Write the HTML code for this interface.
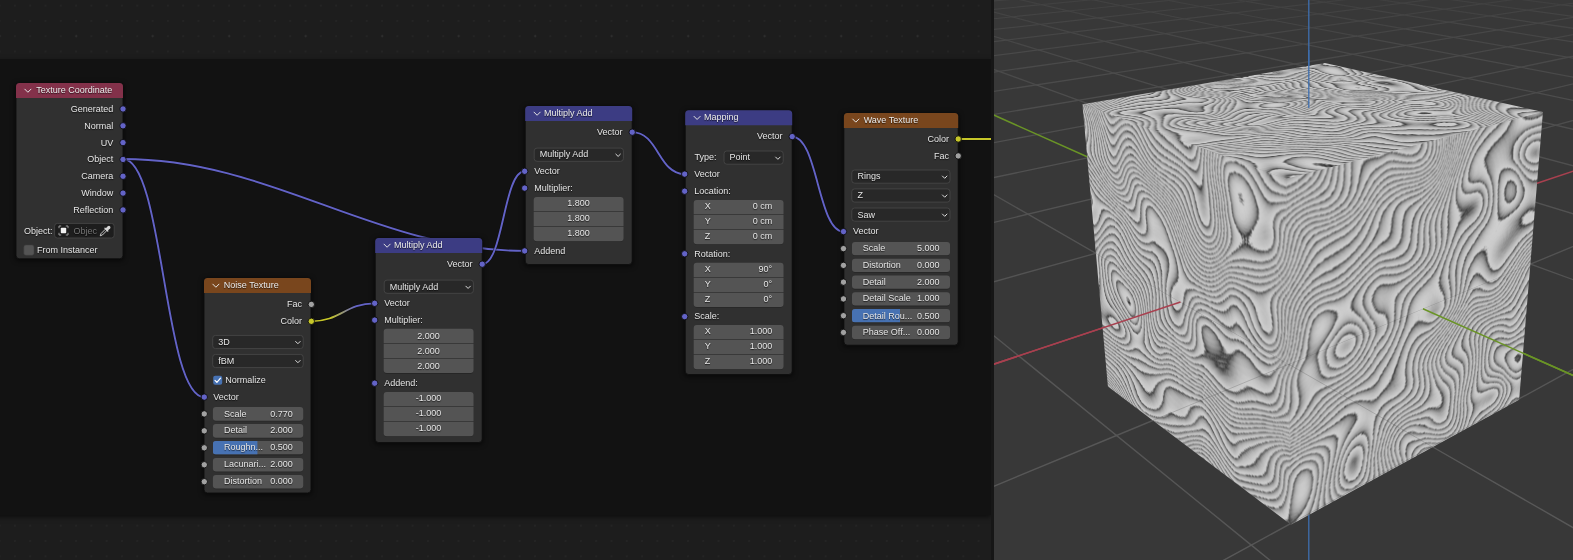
<!DOCTYPE html>
<html><head><meta charset="utf-8"><title>Blender node setup</title>
<style>
html,body{margin:0;padding:0}
body{width:1573px;height:560px;overflow:hidden;position:relative;background:#1d1d1d;font-family:"Liberation Sans",sans-serif;font-size:9px;color:#e6e6e6}
.abs{position:absolute}
#ed{position:absolute;left:0;top:0;width:991px;height:560px;background-color:#1d1d1d;background-image:radial-gradient(circle,#333 0.7px,rgba(51,51,51,0) 1.2px),radial-gradient(circle,#252525 0.6px,rgba(37,37,37,0) 1.1px);background-size:76.5px 76.5px,15.3px 15.3px;background-position:38.0px -2.2px,-8.05px -2.05px;overflow:hidden}
#frame{position:absolute;left:-10px;top:58.8px;width:1001px;height:456.6px;background:#121212;box-shadow:0 2px 5px rgba(0,0,0,.55)}
#nodes{position:absolute;left:0;top:0;width:1573px;height:560px;will-change:transform}
#split{position:absolute;left:991px;top:0;width:3px;height:560px;background:#161616}
.t{position:absolute;white-space:nowrap;height:14px;line-height:14px;text-shadow:0 0.6px 1px rgba(0,0,0,.7)}
.ht{color:#ececec}
.dim{color:#737373}
.face{position:absolute;left:0;top:0;overflow:hidden;transform-origin:0 0}
</style></head><body>
<div id="ed"><div id="frame"></div></div>
<div id="split"></div>
<div id="nodes">

<svg class="abs" style="left:0;top:0" width="991" height="560" viewBox="0 0 991 560"><defs><filter id="sh" x="-20%" y="-20%" width="140%" height="140%"><feGaussianBlur stdDeviation="2.6"/></filter></defs><path d="M123,159.0 C163.7,159.0 163.7,397.1 204.3,397.1" fill="none" stroke="#0b0b0b" stroke-width="2.9" stroke-opacity="0.7"/><path d="M123,159.0 C163.7,159.0 163.7,397.1 204.3,397.1" fill="none" stroke="#6363c7" stroke-width="1.9"/><path d="M123,159.0 C272.3,159.0 375.3,250.9 524.6,250.9" fill="none" stroke="#0b0b0b" stroke-width="2.9" stroke-opacity="0.7"/><path d="M123,159.0 C272.3,159.0 375.3,250.9 524.6,250.9" fill="none" stroke="#6363c7" stroke-width="1.9"/><linearGradient id="g1" gradientUnits="userSpaceOnUse" x1="311.3" y1="0" x2="374.6" y2="0"><stop offset="0.3" stop-color="#c7c729"/><stop offset="0.7" stop-color="#6363c7"/></linearGradient><path d="M311.3,321.3 C340.4,321.3 345.5,303.4 374.6,303.4" fill="none" stroke="#0b0b0b" stroke-width="2.9" stroke-opacity="0.7"/><path d="M311.3,321.3 C340.4,321.3 345.5,303.4 374.6,303.4" fill="none" stroke="url(#g1)" stroke-width="1.8"/><path d="M482.1,264.3 C503.4,264.3 503.4,171.3 524.6,171.3" fill="none" stroke="#0b0b0b" stroke-width="2.9" stroke-opacity="0.7"/><path d="M482.1,264.3 C503.4,264.3 503.4,171.3 524.6,171.3" fill="none" stroke="#6363c7" stroke-width="1.9"/><path d="M632.1,132.1 C658.4,132.1 658.4,174.1 684.6,174.1" fill="none" stroke="#0b0b0b" stroke-width="2.9" stroke-opacity="0.7"/><path d="M632.1,132.1 C658.4,132.1 658.4,174.1 684.6,174.1" fill="none" stroke="#6363c7" stroke-width="1.9"/><path d="M792.1,136.6 C817.9,136.6 817.9,231.6 843.6,231.6" fill="none" stroke="#0b0b0b" stroke-width="2.9" stroke-opacity="0.7"/><path d="M792.1,136.6 C817.9,136.6 817.9,231.6 843.6,231.6" fill="none" stroke="#6363c7" stroke-width="1.9"/><path d="M958,139 L991,139" stroke="#0b0b0b" stroke-width="2.9" stroke-opacity=".7"/><path d="M958,139 L991,139" stroke="#c7c729" stroke-width="1.8"/><rect x="15.00" y="83.50" width="109.00" height="177.30" rx="4" fill="#000" fill-opacity="0.6" filter="url(#sh)"/><rect x="16.00" y="83.00" width="107.00" height="175.80" rx="3.5" fill="#303030" stroke="#0e0e0e" stroke-width="0.9"/><path d="M16.00,98.10 V86.50 Q16.00,83.00 19.50,83.00 H119.50 Q123.00,83.00 123.00,86.50 V98.10 Z" fill="#83314a"/><path d="M24.80,89.15 L27.90,92.25 L31.00,89.15" fill="none" stroke="#e4e4e4" stroke-width="1.0" stroke-linecap="round" stroke-linejoin="round"/><rect x="54.60" y="223.40" width="59.60" height="14.60" rx="2.8" fill="#1d1d1d" stroke="#454545" stroke-width="0.9"/><rect x="23.8" y="244.9" width="10.2" height="10.4" rx="2" fill="#545454" stroke="#3d3d3d" stroke-width="0.6"/><rect x="203.00" y="278.50" width="109.00" height="216.50" rx="4" fill="#000" fill-opacity="0.6" filter="url(#sh)"/><rect x="204.00" y="278.00" width="107.00" height="215.00" rx="3.5" fill="#303030" stroke="#0e0e0e" stroke-width="0.9"/><path d="M204.00,293.10 V281.50 Q204.00,278.00 207.50,278.00 H307.50 Q311.00,278.00 311.00,281.50 V293.10 Z" fill="#79461d"/><path d="M212.80,284.15 L215.90,287.25 L219.00,284.15" fill="none" stroke="#e4e4e4" stroke-width="1.0" stroke-linecap="round" stroke-linejoin="round"/><rect x="212.70" y="335.40" width="90.50" height="13.20" rx="2.8" fill="#282828" stroke="#464646" stroke-width="0.9"/><path d="M295.65,341.48 L297.90,343.73 L300.15,341.48" fill="none" stroke="#dcdcdc" stroke-width="1.0" stroke-linecap="round" stroke-linejoin="round"/><rect x="212.70" y="354.40" width="90.50" height="13.20" rx="2.8" fill="#282828" stroke="#464646" stroke-width="0.9"/><path d="M295.65,360.48 L297.90,362.73 L300.15,360.48" fill="none" stroke="#dcdcdc" stroke-width="1.0" stroke-linecap="round" stroke-linejoin="round"/><rect x="213.2" y="375.8" width="9" height="9" rx="2" fill="#4772b3"/><path d="M215,380.4 L216.9,382.3 L220.5,378.1" fill="none" stroke="#fff" stroke-width="1.2" stroke-linecap="round" stroke-linejoin="round"/><path d="M213.20,417.50 Q213.20,417.50 213.20,417.50 H302.90 Q302.90,417.50 302.90,417.50 V418.50 Q302.90,421.50 299.90,421.50 H216.20 Q213.20,421.50 213.20,418.50 Z" fill="#262626"/><path d="M212.90,410.10 Q212.90,407.10 215.90,407.10 H300.20 Q303.20,407.10 303.20,410.10 V417.70 Q303.20,420.70 300.20,420.70 H215.90 Q212.90,420.70 212.90,417.70 Z" fill="#545454"/><path d="M213.20,434.45 Q213.20,434.45 213.20,434.45 H302.90 Q302.90,434.45 302.90,434.45 V435.45 Q302.90,438.45 299.90,438.45 H216.20 Q213.20,438.45 213.20,435.45 Z" fill="#262626"/><path d="M212.90,427.05 Q212.90,424.05 215.90,424.05 H300.20 Q303.20,424.05 303.20,427.05 V434.65 Q303.20,437.65 300.20,437.65 H215.90 Q212.90,437.65 212.90,434.65 Z" fill="#545454"/><path d="M213.20,451.40 Q213.20,451.40 213.20,451.40 H302.90 Q302.90,451.40 302.90,451.40 V452.40 Q302.90,455.40 299.90,455.40 H216.20 Q213.20,455.40 213.20,452.40 Z" fill="#262626"/><clipPath id="fc1"><rect x="212.90" y="441.00" width="90.30" height="13.60" rx="3"/></clipPath><g clip-path="url(#fc1)"><rect x="212.90" y="441.00" width="90.30" height="13.60" fill="#545454"/><rect x="212.90" y="441.00" width="44.50" height="13.60" fill="#4772b3"/></g><path d="M213.20,468.35 Q213.20,468.35 213.20,468.35 H302.90 Q302.90,468.35 302.90,468.35 V469.35 Q302.90,472.35 299.90,472.35 H216.20 Q213.20,472.35 213.20,469.35 Z" fill="#262626"/><path d="M212.90,460.95 Q212.90,457.95 215.90,457.95 H300.20 Q303.20,457.95 303.20,460.95 V468.55 Q303.20,471.55 300.20,471.55 H215.90 Q212.90,471.55 212.90,468.55 Z" fill="#545454"/><path d="M213.20,485.30 Q213.20,485.30 213.20,485.30 H302.90 Q302.90,485.30 302.90,485.30 V486.30 Q302.90,489.30 299.90,489.30 H216.20 Q213.20,489.30 213.20,486.30 Z" fill="#262626"/><path d="M212.90,477.90 Q212.90,474.90 215.90,474.90 H300.20 Q303.20,474.90 303.20,477.90 V485.50 Q303.20,488.50 300.20,488.50 H215.90 Q212.90,488.50 212.90,485.50 Z" fill="#545454"/><rect x="374.20" y="238.50" width="109.00" height="206.00" rx="4" fill="#000" fill-opacity="0.6" filter="url(#sh)"/><rect x="375.20" y="238.00" width="107.00" height="204.50" rx="3.5" fill="#303030" stroke="#0e0e0e" stroke-width="0.9"/><path d="M375.20,253.10 V241.50 Q375.20,238.00 378.70,238.00 H478.70 Q482.20,238.00 482.20,241.50 V253.10 Z" fill="#3c3c83"/><path d="M384.00,244.15 L387.10,247.25 L390.20,244.15" fill="none" stroke="#e4e4e4" stroke-width="1.0" stroke-linecap="round" stroke-linejoin="round"/><rect x="384.20" y="280.10" width="89.20" height="13.20" rx="2.8" fill="#282828" stroke="#464646" stroke-width="0.9"/><path d="M465.85,286.18 L468.10,288.43 L470.35,286.18" fill="none" stroke="#dcdcdc" stroke-width="1.0" stroke-linecap="round" stroke-linejoin="round"/><path d="M383.70,331.80 Q383.70,328.80 386.70,328.80 H470.50 Q473.50,328.80 473.50,331.80 V343.10 Q473.50,343.10 473.50,343.10 H383.70 Q383.70,343.10 383.70,343.10 Z" fill="#545454"/><path d="M383.70,343.80 Q383.70,343.80 383.70,343.80 H473.50 Q473.50,343.80 473.50,343.80 V358.10 Q473.50,358.10 473.50,358.10 H383.70 Q383.70,358.10 383.70,358.10 Z" fill="#545454"/><path d="M384.00,369.90 Q384.00,369.90 384.00,369.90 H473.20 Q473.20,369.90 473.20,369.90 V370.90 Q473.20,373.90 470.20,373.90 H387.00 Q384.00,373.90 384.00,370.90 Z" fill="#262626"/><path d="M383.70,358.80 Q383.70,358.80 383.70,358.80 H473.50 Q473.50,358.80 473.50,358.80 V370.10 Q473.50,373.10 470.50,373.10 H386.70 Q383.70,373.10 383.70,370.10 Z" fill="#545454"/><path d="M383.70,395.00 Q383.70,392.00 386.70,392.00 H470.50 Q473.50,392.00 473.50,395.00 V406.30 Q473.50,406.30 473.50,406.30 H383.70 Q383.70,406.30 383.70,406.30 Z" fill="#545454"/><path d="M383.70,407.00 Q383.70,407.00 383.70,407.00 H473.50 Q473.50,407.00 473.50,407.00 V421.30 Q473.50,421.30 473.50,421.30 H383.70 Q383.70,421.30 383.70,421.30 Z" fill="#545454"/><path d="M384.00,433.10 Q384.00,433.10 384.00,433.10 H473.20 Q473.20,433.10 473.20,433.10 V434.10 Q473.20,437.10 470.20,437.10 H387.00 Q384.00,437.10 384.00,434.10 Z" fill="#262626"/><path d="M383.70,422.00 Q383.70,422.00 383.70,422.00 H473.50 Q473.50,422.00 473.50,422.00 V433.30 Q473.50,436.30 470.50,436.30 H386.70 Q383.70,436.30 383.70,433.30 Z" fill="#545454"/><rect x="524.20" y="106.50" width="109.00" height="160.00" rx="4" fill="#000" fill-opacity="0.6" filter="url(#sh)"/><rect x="525.20" y="106.00" width="107.00" height="158.50" rx="3.5" fill="#303030" stroke="#0e0e0e" stroke-width="0.9"/><path d="M525.20,121.10 V109.50 Q525.20,106.00 528.70,106.00 H628.70 Q632.20,106.00 632.20,109.50 V121.10 Z" fill="#3c3c83"/><path d="M534.00,112.15 L537.10,115.25 L540.20,112.15" fill="none" stroke="#e4e4e4" stroke-width="1.0" stroke-linecap="round" stroke-linejoin="round"/><rect x="534.20" y="148.10" width="89.20" height="13.20" rx="2.8" fill="#282828" stroke="#464646" stroke-width="0.9"/><path d="M615.85,154.17 L618.10,156.42 L620.35,154.17" fill="none" stroke="#dcdcdc" stroke-width="1.0" stroke-linecap="round" stroke-linejoin="round"/><path d="M533.70,200.00 Q533.70,197.00 536.70,197.00 H620.50 Q623.50,197.00 623.50,200.00 V211.30 Q623.50,211.30 623.50,211.30 H533.70 Q533.70,211.30 533.70,211.30 Z" fill="#545454"/><path d="M533.70,212.00 Q533.70,212.00 533.70,212.00 H623.50 Q623.50,212.00 623.50,212.00 V226.30 Q623.50,226.30 623.50,226.30 H533.70 Q533.70,226.30 533.70,226.30 Z" fill="#545454"/><path d="M534.00,238.10 Q534.00,238.10 534.00,238.10 H623.20 Q623.20,238.10 623.20,238.10 V239.10 Q623.20,242.10 620.20,242.10 H537.00 Q534.00,242.10 534.00,239.10 Z" fill="#262626"/><path d="M533.70,227.00 Q533.70,227.00 533.70,227.00 H623.50 Q623.50,227.00 623.50,227.00 V238.30 Q623.50,241.30 620.50,241.30 H536.70 Q533.70,241.30 533.70,238.30 Z" fill="#545454"/><rect x="684.20" y="110.70" width="109.00" height="265.80" rx="4" fill="#000" fill-opacity="0.6" filter="url(#sh)"/><rect x="685.20" y="110.20" width="107.00" height="264.30" rx="3.5" fill="#303030" stroke="#0e0e0e" stroke-width="0.9"/><path d="M685.20,125.30 V113.70 Q685.20,110.20 688.70,110.20 H788.70 Q792.20,110.20 792.20,113.70 V125.30 Z" fill="#3c3c83"/><path d="M694.00,116.35 L697.10,119.45 L700.20,116.35" fill="none" stroke="#e4e4e4" stroke-width="1.0" stroke-linecap="round" stroke-linejoin="round"/><rect x="724.00" y="151.00" width="59.20" height="13.20" rx="2.8" fill="#282828" stroke="#464646" stroke-width="0.9"/><path d="M775.65,157.07 L777.90,159.32 L780.15,157.07" fill="none" stroke="#dcdcdc" stroke-width="1.0" stroke-linecap="round" stroke-linejoin="round"/><path d="M693.70,203.00 Q693.70,200.00 696.70,200.00 H780.50 Q783.50,200.00 783.50,203.00 V214.30 Q783.50,214.30 783.50,214.30 H693.70 Q693.70,214.30 693.70,214.30 Z" fill="#545454"/><path d="M693.70,215.00 Q693.70,215.00 693.70,215.00 H783.50 Q783.50,215.00 783.50,215.00 V229.30 Q783.50,229.30 783.50,229.30 H693.70 Q693.70,229.30 693.70,229.30 Z" fill="#545454"/><path d="M694.00,241.10 Q694.00,241.10 694.00,241.10 H783.20 Q783.20,241.10 783.20,241.10 V242.10 Q783.20,245.10 780.20,245.10 H697.00 Q694.00,245.10 694.00,242.10 Z" fill="#262626"/><path d="M693.70,230.00 Q693.70,230.00 693.70,230.00 H783.50 Q783.50,230.00 783.50,230.00 V241.30 Q783.50,244.30 780.50,244.30 H696.70 Q693.70,244.30 693.70,241.30 Z" fill="#545454"/><path d="M693.70,265.70 Q693.70,262.70 696.70,262.70 H780.50 Q783.50,262.70 783.50,265.70 V277.00 Q783.50,277.00 783.50,277.00 H693.70 Q693.70,277.00 693.70,277.00 Z" fill="#545454"/><path d="M693.70,277.70 Q693.70,277.70 693.70,277.70 H783.50 Q783.50,277.70 783.50,277.70 V292.00 Q783.50,292.00 783.50,292.00 H693.70 Q693.70,292.00 693.70,292.00 Z" fill="#545454"/><path d="M694.00,303.80 Q694.00,303.80 694.00,303.80 H783.20 Q783.20,303.80 783.20,303.80 V304.80 Q783.20,307.80 780.20,307.80 H697.00 Q694.00,307.80 694.00,304.80 Z" fill="#262626"/><path d="M693.70,292.70 Q693.70,292.70 693.70,292.70 H783.50 Q783.50,292.70 783.50,292.70 V304.00 Q783.50,307.00 780.50,307.00 H696.70 Q693.70,307.00 693.70,304.00 Z" fill="#545454"/><path d="M693.70,328.00 Q693.70,325.00 696.70,325.00 H780.50 Q783.50,325.00 783.50,328.00 V339.30 Q783.50,339.30 783.50,339.30 H693.70 Q693.70,339.30 693.70,339.30 Z" fill="#545454"/><path d="M693.70,340.00 Q693.70,340.00 693.70,340.00 H783.50 Q783.50,340.00 783.50,340.00 V354.30 Q783.50,354.30 783.50,354.30 H693.70 Q693.70,354.30 693.70,354.30 Z" fill="#545454"/><path d="M694.00,366.10 Q694.00,366.10 694.00,366.10 H783.20 Q783.20,366.10 783.20,366.10 V367.10 Q783.20,370.10 780.20,370.10 H697.00 Q694.00,370.10 694.00,367.10 Z" fill="#262626"/><path d="M693.70,355.00 Q693.70,355.00 693.70,355.00 H783.50 Q783.50,355.00 783.50,355.00 V366.30 Q783.50,369.30 780.50,369.30 H696.70 Q693.70,369.30 693.70,366.30 Z" fill="#545454"/><rect x="842.90" y="113.40" width="116.30" height="233.80" rx="4" fill="#000" fill-opacity="0.6" filter="url(#sh)"/><rect x="843.90" y="112.90" width="114.30" height="232.30" rx="3.5" fill="#303030" stroke="#0e0e0e" stroke-width="0.9"/><path d="M843.90,128.00 V116.40 Q843.90,112.90 847.40,112.90 H954.70 Q958.20,112.90 958.20,116.40 V128.00 Z" fill="#79461d"/><path d="M852.70,119.05 L855.80,122.15 L858.90,119.05" fill="none" stroke="#e4e4e4" stroke-width="1.0" stroke-linecap="round" stroke-linejoin="round"/><rect x="851.80" y="170.00" width="98.20" height="13.20" rx="2.8" fill="#282828" stroke="#464646" stroke-width="0.9"/><path d="M942.45,176.07 L944.70,178.32 L946.95,176.07" fill="none" stroke="#dcdcdc" stroke-width="1.0" stroke-linecap="round" stroke-linejoin="round"/><rect x="851.80" y="188.90" width="98.20" height="13.20" rx="2.8" fill="#282828" stroke="#464646" stroke-width="0.9"/><path d="M942.45,194.97 L944.70,197.22 L946.95,194.97" fill="none" stroke="#dcdcdc" stroke-width="1.0" stroke-linecap="round" stroke-linejoin="round"/><rect x="851.80" y="208.00" width="98.20" height="13.20" rx="2.8" fill="#282828" stroke="#464646" stroke-width="0.9"/><path d="M942.45,214.07 L944.70,216.32 L946.95,214.07" fill="none" stroke="#dcdcdc" stroke-width="1.0" stroke-linecap="round" stroke-linejoin="round"/><path d="M852.30,252.10 Q852.30,252.10 852.30,252.10 H949.70 Q949.70,252.10 949.70,252.10 V253.10 Q949.70,256.10 946.70,256.10 H855.30 Q852.30,256.10 852.30,253.10 Z" fill="#262626"/><path d="M852.00,244.90 Q852.00,241.90 855.00,241.90 H947.00 Q950.00,241.90 950.00,244.90 V252.30 Q950.00,255.30 947.00,255.30 H855.00 Q852.00,255.30 852.00,252.30 Z" fill="#545454"/><path d="M852.30,268.87 Q852.30,268.87 852.30,268.87 H949.70 Q949.70,268.87 949.70,268.87 V269.87 Q949.70,272.87 946.70,272.87 H855.30 Q852.30,272.87 852.30,269.87 Z" fill="#262626"/><path d="M852.00,261.67 Q852.00,258.67 855.00,258.67 H947.00 Q950.00,258.67 950.00,261.67 V269.07 Q950.00,272.07 947.00,272.07 H855.00 Q852.00,272.07 852.00,269.07 Z" fill="#545454"/><path d="M852.30,285.64 Q852.30,285.64 852.30,285.64 H949.70 Q949.70,285.64 949.70,285.64 V286.64 Q949.70,289.64 946.70,289.64 H855.30 Q852.30,289.64 852.30,286.64 Z" fill="#262626"/><path d="M852.00,278.44 Q852.00,275.44 855.00,275.44 H947.00 Q950.00,275.44 950.00,278.44 V285.84 Q950.00,288.84 947.00,288.84 H855.00 Q852.00,288.84 852.00,285.84 Z" fill="#545454"/><path d="M852.30,302.41 Q852.30,302.41 852.30,302.41 H949.70 Q949.70,302.41 949.70,302.41 V303.41 Q949.70,306.41 946.70,306.41 H855.30 Q852.30,306.41 852.30,303.41 Z" fill="#262626"/><path d="M852.00,295.21 Q852.00,292.21 855.00,292.21 H947.00 Q950.00,292.21 950.00,295.21 V302.61 Q950.00,305.61 947.00,305.61 H855.00 Q852.00,305.61 852.00,302.61 Z" fill="#545454"/><path d="M852.30,319.18 Q852.30,319.18 852.30,319.18 H949.70 Q949.70,319.18 949.70,319.18 V320.18 Q949.70,323.18 946.70,323.18 H855.30 Q852.30,323.18 852.30,320.18 Z" fill="#262626"/><clipPath id="fc2"><rect x="852.00" y="308.98" width="98.00" height="13.40" rx="3"/></clipPath><g clip-path="url(#fc2)"><rect x="852.00" y="308.98" width="98.00" height="13.40" fill="#545454"/><rect x="852.00" y="308.98" width="48.00" height="13.40" fill="#4772b3"/></g><path d="M852.30,335.95 Q852.30,335.95 852.30,335.95 H949.70 Q949.70,335.95 949.70,335.95 V336.95 Q949.70,339.95 946.70,339.95 H855.30 Q852.30,339.95 852.30,336.95 Z" fill="#262626"/><path d="M852.00,328.75 Q852.00,325.75 855.00,325.75 H947.00 Q950.00,325.75 950.00,328.75 V336.15 Q950.00,339.15 947.00,339.15 H855.00 Q852.00,339.15 852.00,336.15 Z" fill="#545454"/><circle cx="123.00" cy="108.95" r="3.2" fill="#6363c7" stroke="#0d0d0d" stroke-width="0.9"/><circle cx="123.00" cy="125.78" r="3.2" fill="#6363c7" stroke="#0d0d0d" stroke-width="0.9"/><circle cx="123.00" cy="142.61" r="3.2" fill="#6363c7" stroke="#0d0d0d" stroke-width="0.9"/><circle cx="123.00" cy="159.44" r="3.2" fill="#6363c7" stroke="#0d0d0d" stroke-width="0.9"/><circle cx="123.00" cy="176.27" r="3.2" fill="#6363c7" stroke="#0d0d0d" stroke-width="0.9"/><circle cx="123.00" cy="193.10" r="3.2" fill="#6363c7" stroke="#0d0d0d" stroke-width="0.9"/><circle cx="123.00" cy="209.93" r="3.2" fill="#6363c7" stroke="#0d0d0d" stroke-width="0.9"/><circle cx="311.30" cy="304.40" r="3.2" fill="#a1a1a1" stroke="#0d0d0d" stroke-width="0.9"/><circle cx="311.30" cy="321.30" r="3.2" fill="#c7c729" stroke="#0d0d0d" stroke-width="0.9"/><circle cx="204.30" cy="397.10" r="3.2" fill="#6363c7" stroke="#0d0d0d" stroke-width="0.9"/><circle cx="204.30" cy="413.90" r="3.2" fill="#a1a1a1" stroke="#0d0d0d" stroke-width="0.9"/><circle cx="204.30" cy="430.85" r="3.2" fill="#a1a1a1" stroke="#0d0d0d" stroke-width="0.9"/><circle cx="204.30" cy="447.80" r="3.2" fill="#a1a1a1" stroke="#0d0d0d" stroke-width="0.9"/><circle cx="204.30" cy="464.75" r="3.2" fill="#a1a1a1" stroke="#0d0d0d" stroke-width="0.9"/><circle cx="204.30" cy="481.70" r="3.2" fill="#a1a1a1" stroke="#0d0d0d" stroke-width="0.9"/><circle cx="482.20" cy="264.20" r="3.2" fill="#6363c7" stroke="#0d0d0d" stroke-width="0.9"/><circle cx="374.70" cy="303.30" r="3.2" fill="#6363c7" stroke="#0d0d0d" stroke-width="0.9"/><circle cx="374.70" cy="320.10" r="3.2" fill="#6363c7" stroke="#0d0d0d" stroke-width="0.9"/><circle cx="374.70" cy="383.20" r="3.2" fill="#6363c7" stroke="#0d0d0d" stroke-width="0.9"/><circle cx="632.20" cy="132.20" r="3.2" fill="#6363c7" stroke="#0d0d0d" stroke-width="0.9"/><circle cx="524.70" cy="171.30" r="3.2" fill="#6363c7" stroke="#0d0d0d" stroke-width="0.9"/><circle cx="524.70" cy="188.10" r="3.2" fill="#6363c7" stroke="#0d0d0d" stroke-width="0.9"/><circle cx="524.70" cy="250.90" r="3.2" fill="#6363c7" stroke="#0d0d0d" stroke-width="0.9"/><circle cx="792.20" cy="136.60" r="3.2" fill="#6363c7" stroke="#0d0d0d" stroke-width="0.9"/><circle cx="684.70" cy="174.10" r="3.2" fill="#6363c7" stroke="#0d0d0d" stroke-width="0.9"/><circle cx="684.70" cy="191.20" r="3.2" fill="#6363c7" stroke="#0d0d0d" stroke-width="0.9"/><circle cx="684.70" cy="253.80" r="3.2" fill="#6363c7" stroke="#0d0d0d" stroke-width="0.9"/><circle cx="684.70" cy="316.60" r="3.2" fill="#6363c7" stroke="#0d0d0d" stroke-width="0.9"/><circle cx="958.20" cy="139.00" r="3.2" fill="#c7c729" stroke="#0d0d0d" stroke-width="0.9"/><circle cx="958.20" cy="155.90" r="3.2" fill="#a1a1a1" stroke="#0d0d0d" stroke-width="0.9"/><circle cx="843.50" cy="231.60" r="3.2" fill="#6363c7" stroke="#0d0d0d" stroke-width="0.9"/><circle cx="843.50" cy="248.60" r="3.2" fill="#a1a1a1" stroke="#0d0d0d" stroke-width="0.9"/><circle cx="843.50" cy="265.37" r="3.2" fill="#a1a1a1" stroke="#0d0d0d" stroke-width="0.9"/><circle cx="843.50" cy="282.14" r="3.2" fill="#a1a1a1" stroke="#0d0d0d" stroke-width="0.9"/><circle cx="843.50" cy="298.91" r="3.2" fill="#a1a1a1" stroke="#0d0d0d" stroke-width="0.9"/><circle cx="843.50" cy="315.68" r="3.2" fill="#a1a1a1" stroke="#0d0d0d" stroke-width="0.9"/><circle cx="843.50" cy="332.45" r="3.2" fill="#a1a1a1" stroke="#0d0d0d" stroke-width="0.9"/></svg>
<div class="t ht" style="left:36.20px;top:83.00px">Texture Coordinate</div>
<div class="t " style="right:1459.70px;text-align:right;top:101.95px">Generated</div>
<div class="t " style="right:1459.70px;text-align:right;top:118.78px">Normal</div>
<div class="t " style="right:1459.70px;text-align:right;top:135.61px">UV</div>
<div class="t " style="right:1459.70px;text-align:right;top:152.44px">Object</div>
<div class="t " style="right:1459.70px;text-align:right;top:169.27px">Camera</div>
<div class="t " style="right:1459.70px;text-align:right;top:186.10px">Window</div>
<div class="t " style="right:1459.70px;text-align:right;top:202.93px">Reflection</div>
<div class="t " style="left:24.00px;top:223.50px">Object:</div>
<svg class="abs" style="left:57.7px;top:225.3px" width="11" height="11" viewBox="0 0 11 11"><path d="M1,3.2V1H3.2M7.8,1H10V3.2M10,7.8V10H7.8M3.2,10H1V7.8" fill="none" stroke="#9a9a9a" stroke-width="1"/><rect x="2.8" y="2.8" width="5.4" height="5.4" rx="0.8" fill="#f2f2f2"/></svg>
<div class="t dim" style="left:73.50px;top:223.50px">Objec</div>
<svg class="abs" style="left:99px;top:225px" width="12" height="12" viewBox="0 0 12 12"><path d="M1.2,10.8 L2,8.6 L6.6,4 L8,5.4 L3.4,10 Z" fill="none" stroke="#d8d8d8" stroke-width="0.9" stroke-linejoin="round"/><path d="M6,3.2 L8.8,6 M7,4.4 L8.6,2.2 Q9.8,1 10.6,1.9 Q11.2,2.8 9.9,3.8 L7.9,5.3" fill="#d8d8d8" stroke="#d8d8d8" stroke-width="1.3" stroke-linecap="round"/></svg>
<div class="t " style="left:37.00px;top:243.00px">From Instancer</div>
<div class="t ht" style="left:223.80px;top:278.00px">Noise Texture</div>
<div class="t " style="right:1271.00px;text-align:right;top:297.30px">Fac</div>
<div class="t " style="right:1271.00px;text-align:right;top:314.20px">Color</div>
<div class="t " style="left:218.30px;top:334.70px">3D</div>
<div class="t " style="left:218.30px;top:353.70px">fBM</div>
<div class="t " style="left:225.20px;top:373.20px">Normalize</div>
<div class="t " style="left:213.20px;top:390.00px">Vector</div>
<div class="t " style="left:223.90px;top:407.20px">Scale</div>
<div class="t " style="right:1280.30px;text-align:right;top:407.20px">0.770</div>
<div class="t " style="left:223.90px;top:423.35px">Detail</div>
<div class="t " style="right:1280.30px;text-align:right;top:423.35px">2.000</div>
<div class="t " style="left:223.90px;top:440.30px">Roughn...</div>
<div class="t " style="right:1280.30px;text-align:right;top:440.30px">0.500</div>
<div class="t " style="left:223.90px;top:457.25px">Lacunari...</div>
<div class="t " style="right:1280.30px;text-align:right;top:457.25px">2.000</div>
<div class="t " style="left:223.90px;top:474.20px">Distortion</div>
<div class="t " style="right:1280.30px;text-align:right;top:474.20px">0.000</div>
<div class="t ht" style="left:393.90px;top:238.00px">Multiply Add</div>
<div class="t " style="right:1100.50px;text-align:right;top:257.10px">Vector</div>
<div class="t " style="left:389.80px;top:280.10px">Multiply Add</div>
<div class="t " style="left:384.20px;top:296.20px">Vector</div>
<div class="t " style="left:384.20px;top:313.00px">Multiplier:</div>
<div class="t " style="left:383.70px;width:89.80px;text-align:center;top:329.05px">2.000</div>
<div class="t " style="left:383.70px;width:89.80px;text-align:center;top:344.05px">2.000</div>
<div class="t " style="left:383.70px;width:89.80px;text-align:center;top:359.05px">2.000</div>
<div class="t " style="left:384.20px;top:376.10px">Addend:</div>
<div class="t " style="left:383.70px;width:89.80px;text-align:center;top:391.25px">-1.000</div>
<div class="t " style="left:383.70px;width:89.80px;text-align:center;top:406.25px">-1.000</div>
<div class="t " style="left:383.70px;width:89.80px;text-align:center;top:421.25px">-1.000</div>
<div class="t ht" style="left:543.90px;top:106.00px">Multiply Add</div>
<div class="t " style="right:950.50px;text-align:right;top:125.10px">Vector</div>
<div class="t " style="left:539.80px;top:147.40px">Multiply Add</div>
<div class="t " style="left:534.20px;top:164.20px">Vector</div>
<div class="t " style="left:534.20px;top:181.00px">Multiplier:</div>
<div class="t " style="left:533.70px;width:89.80px;text-align:center;top:196.25px">1.800</div>
<div class="t " style="left:533.70px;width:89.80px;text-align:center;top:211.25px">1.800</div>
<div class="t " style="left:533.70px;width:89.80px;text-align:center;top:226.25px">1.800</div>
<div class="t " style="left:534.20px;top:243.80px">Addend</div>
<div class="t ht" style="left:703.90px;top:110.20px">Mapping</div>
<div class="t " style="right:790.50px;text-align:right;top:129.20px">Vector</div>
<div class="t " style="left:694.40px;top:150.30px">Type:</div>
<div class="t " style="left:729.60px;top:150.30px">Point</div>
<div class="t " style="left:694.20px;top:167.00px">Vector</div>
<div class="t " style="left:694.20px;top:184.10px">Location:</div>
<div class="t " style="left:704.70px;top:199.25px">X</div>
<div class="t " style="right:800.80px;text-align:right;top:199.25px">0 cm</div>
<div class="t " style="left:704.70px;top:214.25px">Y</div>
<div class="t " style="right:800.80px;text-align:right;top:214.25px">0 cm</div>
<div class="t " style="left:704.70px;top:229.25px">Z</div>
<div class="t " style="right:800.80px;text-align:right;top:229.25px">0 cm</div>
<div class="t " style="left:694.20px;top:246.70px">Rotation:</div>
<div class="t " style="left:704.70px;top:261.95px">X</div>
<div class="t " style="right:800.80px;text-align:right;top:261.95px">90°</div>
<div class="t " style="left:704.70px;top:276.95px">Y</div>
<div class="t " style="right:800.80px;text-align:right;top:276.95px">0°</div>
<div class="t " style="left:704.70px;top:291.95px">Z</div>
<div class="t " style="right:800.80px;text-align:right;top:291.95px">0°</div>
<div class="t " style="left:694.20px;top:308.60px">Scale:</div>
<div class="t " style="left:704.70px;top:324.25px">X</div>
<div class="t " style="right:800.80px;text-align:right;top:324.25px">1.000</div>
<div class="t " style="left:704.70px;top:339.25px">Y</div>
<div class="t " style="right:800.80px;text-align:right;top:339.25px">1.000</div>
<div class="t " style="left:704.70px;top:354.25px">Z</div>
<div class="t " style="right:800.80px;text-align:right;top:354.25px">1.000</div>
<div class="t ht" style="left:863.70px;top:112.90px">Wave Texture</div>
<div class="t " style="right:624.00px;text-align:right;top:131.90px">Color</div>
<div class="t " style="right:624.00px;text-align:right;top:148.80px">Fac</div>
<div class="t " style="left:857.40px;top:169.30px">Rings</div>
<div class="t " style="left:857.40px;top:188.20px">Z</div>
<div class="t " style="left:857.40px;top:208.10px">Saw</div>
<div class="t " style="left:853.00px;top:223.90px">Vector</div>
<div class="t " style="left:862.80px;top:241.10px">Scale</div>
<div class="t " style="right:633.50px;text-align:right;top:241.10px">5.000</div>
<div class="t " style="left:862.80px;top:257.87px">Distortion</div>
<div class="t " style="right:633.50px;text-align:right;top:257.87px">0.000</div>
<div class="t " style="left:862.80px;top:274.64px">Detail</div>
<div class="t " style="right:633.50px;text-align:right;top:274.64px">2.000</div>
<div class="t " style="left:862.80px;top:291.41px">Detail Scale</div>
<div class="t " style="right:633.50px;text-align:right;top:291.41px">1.000</div>
<div class="t " style="left:862.80px;top:309.08px">Detail Rou...</div>
<div class="t " style="right:633.50px;text-align:right;top:309.08px">0.500</div>
<div class="t " style="left:862.80px;top:324.95px">Phase Off...</div>
<div class="t " style="right:633.50px;text-align:right;top:324.95px">0.000</div>
</div>
<svg class="abs" style="left:0;top:0" width="1573" height="560" viewBox="0 0 1573 560"><defs><clipPath id="vp"><rect x="994" y="0" width="579" height="560"/></clipPath></defs><g clip-path="url(#vp)"><rect x="994" y="0" width="579" height="560" fill="#383838"/><line x1="993.5" y1="-6.5" x2="885.2" y2="2.9" stroke="#404040" stroke-width="1.21" stroke-linecap="round"/><line x1="1539.8" y1="-14.6" x2="1625.0" y2="-4.8" stroke="#3f3f3f" stroke-width="1.20" stroke-linecap="round"/><line x1="1113.3" y1="-10.1" x2="1016.6" y2="-1.1" stroke="#404040" stroke-width="1.21" stroke-linecap="round"/><line x1="1016.6" y1="-1.1" x2="905.4" y2="9.1" stroke="#424242" stroke-width="1.22" stroke-linecap="round"/><line x1="1508.9" y1="-10.6" x2="1594.7" y2="-0.2" stroke="#3f3f3f" stroke-width="1.20" stroke-linecap="round"/><line x1="1226.4" y1="-13.4" x2="1140.2" y2="-5.0" stroke="#3f3f3f" stroke-width="1.20" stroke-linecap="round"/><line x1="1140.2" y1="-5.0" x2="1041.5" y2="4.7" stroke="#414141" stroke-width="1.21" stroke-linecap="round"/><line x1="1041.5" y1="4.7" x2="927.3" y2="15.9" stroke="#434343" stroke-width="1.23" stroke-linecap="round"/><line x1="1475.9" y1="-6.3" x2="1562.1" y2="4.8" stroke="#404040" stroke-width="1.21" stroke-linecap="round"/><line x1="1562.1" y1="4.8" x2="1663.3" y2="17.9" stroke="#434343" stroke-width="1.23" stroke-linecap="round"/><line x1="1256.6" y1="-8.6" x2="1169.1" y2="0.5" stroke="#404040" stroke-width="1.21" stroke-linecap="round"/><line x1="1169.1" y1="0.5" x2="1068.4" y2="11.0" stroke="#424242" stroke-width="1.22" stroke-linecap="round"/><line x1="1068.4" y1="11.0" x2="951.3" y2="23.2" stroke="#444444" stroke-width="1.24" stroke-linecap="round"/><line x1="1366.5" y1="-12.0" x2="1440.6" y2="-1.8" stroke="#3f3f3f" stroke-width="1.20" stroke-linecap="round"/><line x1="1440.6" y1="-1.8" x2="1527.1" y2="10.1" stroke="#414141" stroke-width="1.22" stroke-linecap="round"/><line x1="1527.1" y1="10.1" x2="1629.3" y2="24.2" stroke="#444444" stroke-width="1.23" stroke-linecap="round"/><line x1="1366.5" y1="-12.0" x2="1289.2" y2="-3.4" stroke="#3f3f3f" stroke-width="1.20" stroke-linecap="round"/><line x1="1289.2" y1="-3.4" x2="1200.5" y2="6.5" stroke="#414141" stroke-width="1.22" stroke-linecap="round"/><line x1="1200.5" y1="6.5" x2="1097.8" y2="17.9" stroke="#434343" stroke-width="1.23" stroke-linecap="round"/><line x1="1097.8" y1="17.9" x2="977.6" y2="31.3" stroke="#454545" stroke-width="1.25" stroke-linecap="round"/><line x1="1329.1" y1="-7.8" x2="1402.9" y2="3.1" stroke="#404040" stroke-width="1.21" stroke-linecap="round"/><line x1="1402.9" y1="3.1" x2="1489.4" y2="15.9" stroke="#424242" stroke-width="1.23" stroke-linecap="round"/><line x1="1489.4" y1="15.9" x2="1592.3" y2="31.1" stroke="#454545" stroke-width="1.24" stroke-linecap="round"/><line x1="1402.2" y1="-7.1" x2="1324.3" y2="2.2" stroke="#404040" stroke-width="1.21" stroke-linecap="round"/><line x1="1324.3" y1="2.2" x2="1234.5" y2="12.9" stroke="#424242" stroke-width="1.22" stroke-linecap="round"/><line x1="1234.5" y1="12.9" x2="1129.9" y2="25.4" stroke="#444444" stroke-width="1.24" stroke-linecap="round"/><line x1="1129.9" y1="25.4" x2="1006.5" y2="40.1" stroke="#464646" stroke-width="1.25" stroke-linecap="round"/><line x1="1006.5" y1="40.1" x2="858.8" y2="57.8" stroke="#484848" stroke-width="1.27" stroke-linecap="round"/><line x1="1226.4" y1="-13.4" x2="1289.2" y2="-3.4" stroke="#3f3f3f" stroke-width="1.20" stroke-linecap="round"/><line x1="1289.2" y1="-3.4" x2="1362.3" y2="8.3" stroke="#414141" stroke-width="1.22" stroke-linecap="round"/><line x1="1362.3" y1="8.3" x2="1448.7" y2="22.1" stroke="#434343" stroke-width="1.23" stroke-linecap="round"/><line x1="1448.7" y1="22.1" x2="1552.1" y2="38.6" stroke="#464646" stroke-width="1.25" stroke-linecap="round"/><line x1="1552.1" y1="38.6" x2="1678.3" y2="58.7" stroke="#484848" stroke-width="1.27" stroke-linecap="round"/><line x1="1508.9" y1="-10.6" x2="1440.6" y2="-1.8" stroke="#3f3f3f" stroke-width="1.20" stroke-linecap="round"/><line x1="1440.6" y1="-1.8" x2="1362.3" y2="8.3" stroke="#414141" stroke-width="1.22" stroke-linecap="round"/><line x1="1362.3" y1="8.3" x2="1271.6" y2="20.0" stroke="#434343" stroke-width="1.23" stroke-linecap="round"/><line x1="1271.6" y1="20.0" x2="1165.1" y2="33.7" stroke="#454545" stroke-width="1.25" stroke-linecap="round"/><line x1="1165.1" y1="33.7" x2="1038.5" y2="49.9" stroke="#474747" stroke-width="1.26" stroke-linecap="round"/><line x1="1038.5" y1="49.9" x2="885.4" y2="69.6" stroke="#494949" stroke-width="1.28" stroke-linecap="round"/><line x1="1184.7" y1="-9.3" x2="1246.4" y2="1.4" stroke="#404040" stroke-width="1.21" stroke-linecap="round"/><line x1="1246.4" y1="1.4" x2="1318.7" y2="13.9" stroke="#424242" stroke-width="1.22" stroke-linecap="round"/><line x1="1318.7" y1="13.9" x2="1404.6" y2="28.8" stroke="#444444" stroke-width="1.24" stroke-linecap="round"/><line x1="1404.6" y1="28.8" x2="1508.2" y2="46.8" stroke="#474747" stroke-width="1.26" stroke-linecap="round"/><line x1="1508.2" y1="46.8" x2="1635.8" y2="68.9" stroke="#494949" stroke-width="1.27" stroke-linecap="round"/><line x1="1550.2" y1="-5.6" x2="1482.1" y2="3.9" stroke="#404040" stroke-width="1.21" stroke-linecap="round"/><line x1="1482.1" y1="3.9" x2="1403.7" y2="14.9" stroke="#424242" stroke-width="1.23" stroke-linecap="round"/><line x1="1403.7" y1="14.9" x2="1312.1" y2="27.7" stroke="#444444" stroke-width="1.24" stroke-linecap="round"/><line x1="1312.1" y1="27.7" x2="1203.9" y2="42.7" stroke="#464646" stroke-width="1.26" stroke-linecap="round"/><line x1="1203.9" y1="42.7" x2="1074.1" y2="60.9" stroke="#484848" stroke-width="1.27" stroke-linecap="round"/><line x1="1074.1" y1="60.9" x2="915.5" y2="83.0" stroke="#4a4a4a" stroke-width="1.28" stroke-linecap="round"/><line x1="1088.3" y1="-14.8" x2="1140.2" y2="-5.0" stroke="#3f3f3f" stroke-width="1.20" stroke-linecap="round"/><line x1="1140.2" y1="-5.0" x2="1200.5" y2="6.5" stroke="#414141" stroke-width="1.21" stroke-linecap="round"/><line x1="1200.5" y1="6.5" x2="1271.6" y2="20.0" stroke="#434343" stroke-width="1.23" stroke-linecap="round"/><line x1="1271.6" y1="20.0" x2="1356.6" y2="36.1" stroke="#454545" stroke-width="1.25" stroke-linecap="round"/><line x1="1356.6" y1="36.1" x2="1460.0" y2="55.7" stroke="#484848" stroke-width="1.26" stroke-linecap="round"/><line x1="1460.0" y1="55.7" x2="1588.7" y2="80.1" stroke="#4a4a4a" stroke-width="1.28" stroke-linecap="round"/><line x1="1594.7" y1="-0.2" x2="1527.1" y2="10.1" stroke="#414141" stroke-width="1.22" stroke-linecap="round"/><line x1="1527.1" y1="10.1" x2="1448.7" y2="22.1" stroke="#434343" stroke-width="1.23" stroke-linecap="round"/><line x1="1448.7" y1="22.1" x2="1356.6" y2="36.1" stroke="#454545" stroke-width="1.25" stroke-linecap="round"/><line x1="1356.6" y1="36.1" x2="1246.9" y2="52.8" stroke="#474747" stroke-width="1.26" stroke-linecap="round"/><line x1="1246.9" y1="52.8" x2="1113.9" y2="73.1" stroke="#494949" stroke-width="1.28" stroke-linecap="round"/><line x1="1113.9" y1="73.1" x2="949.4" y2="98.1" stroke="#4b4b4b" stroke-width="1.29" stroke-linecap="round"/><line x1="1042.5" y1="-10.8" x2="1092.5" y2="-0.3" stroke="#404040" stroke-width="1.21" stroke-linecap="round"/><line x1="1092.5" y1="-0.3" x2="1151.1" y2="12.0" stroke="#424242" stroke-width="1.22" stroke-linecap="round"/><line x1="1151.1" y1="12.0" x2="1220.6" y2="26.5" stroke="#444444" stroke-width="1.24" stroke-linecap="round"/><line x1="1220.6" y1="26.5" x2="1304.2" y2="44.1" stroke="#464646" stroke-width="1.26" stroke-linecap="round"/><line x1="1304.2" y1="44.1" x2="1407.0" y2="65.6" stroke="#494949" stroke-width="1.27" stroke-linecap="round"/><line x1="1407.0" y1="65.6" x2="1536.2" y2="92.7" stroke="#4b4b4b" stroke-width="1.29" stroke-linecap="round"/><line x1="1536.2" y1="92.7" x2="1703.6" y2="127.8" stroke="#4d4d4d" stroke-width="1.30" stroke-linecap="round"/><line x1="1642.7" y1="5.7" x2="1576.0" y2="16.9" stroke="#434343" stroke-width="1.23" stroke-linecap="round"/><line x1="1576.0" y1="16.9" x2="1498.0" y2="29.9" stroke="#454545" stroke-width="1.24" stroke-linecap="round"/><line x1="1498.0" y1="29.9" x2="1405.7" y2="45.4" stroke="#474747" stroke-width="1.26" stroke-linecap="round"/><line x1="1405.7" y1="45.4" x2="1294.7" y2="64.0" stroke="#494949" stroke-width="1.27" stroke-linecap="round"/><line x1="1294.7" y1="64.0" x2="1158.7" y2="86.8" stroke="#4b4b4b" stroke-width="1.29" stroke-linecap="round"/><line x1="1158.7" y1="86.8" x2="988.2" y2="115.4" stroke="#4d4d4d" stroke-width="1.30" stroke-linecap="round"/><line x1="993.5" y1="-6.5" x2="1041.5" y2="4.7" stroke="#414141" stroke-width="1.21" stroke-linecap="round"/><line x1="1041.5" y1="4.7" x2="1097.8" y2="17.9" stroke="#434343" stroke-width="1.23" stroke-linecap="round"/><line x1="1097.8" y1="17.9" x2="1165.1" y2="33.7" stroke="#454545" stroke-width="1.25" stroke-linecap="round"/><line x1="1165.1" y1="33.7" x2="1246.9" y2="52.8" stroke="#474747" stroke-width="1.26" stroke-linecap="round"/><line x1="1246.9" y1="52.8" x2="1348.2" y2="76.6" stroke="#4a4a4a" stroke-width="1.28" stroke-linecap="round"/><line x1="1348.2" y1="76.6" x2="1477.3" y2="106.8" stroke="#4c4c4c" stroke-width="1.30" stroke-linecap="round"/><line x1="1477.3" y1="106.8" x2="1647.1" y2="146.6" stroke="#4e4e4e" stroke-width="1.31" stroke-linecap="round"/><line x1="1629.3" y1="24.2" x2="1552.1" y2="38.6" stroke="#464646" stroke-width="1.25" stroke-linecap="round"/><line x1="1552.1" y1="38.6" x2="1460.0" y2="55.7" stroke="#484848" stroke-width="1.27" stroke-linecap="round"/><line x1="1460.0" y1="55.7" x2="1348.2" y2="76.6" stroke="#4a4a4a" stroke-width="1.28" stroke-linecap="round"/><line x1="1348.2" y1="76.6" x2="1209.5" y2="102.4" stroke="#4c4c4c" stroke-width="1.29" stroke-linecap="round"/><line x1="1209.5" y1="102.4" x2="1033.0" y2="135.3" stroke="#4e4e4e" stroke-width="1.31" stroke-linecap="round"/><line x1="1033.0" y1="135.3" x2="800.6" y2="178.5" stroke="#505050" stroke-width="1.32" stroke-linecap="round"/><line x1="986.5" y1="10.1" x2="1040.2" y2="24.3" stroke="#444444" stroke-width="1.24" stroke-linecap="round"/><line x1="1040.2" y1="24.3" x2="1104.7" y2="41.4" stroke="#464646" stroke-width="1.25" stroke-linecap="round"/><line x1="1104.7" y1="41.4" x2="1183.7" y2="62.4" stroke="#484848" stroke-width="1.27" stroke-linecap="round"/><line x1="1183.7" y1="62.4" x2="1282.8" y2="88.7" stroke="#4b4b4b" stroke-width="1.29" stroke-linecap="round"/><line x1="1282.8" y1="88.7" x2="1410.7" y2="122.7" stroke="#4d4d4d" stroke-width="1.30" stroke-linecap="round"/><line x1="1410.7" y1="122.7" x2="1582.2" y2="168.2" stroke="#4f4f4f" stroke-width="1.32" stroke-linecap="round"/><line x1="1611.9" y1="48.1" x2="1520.7" y2="67.2" stroke="#494949" stroke-width="1.27" stroke-linecap="round"/><line x1="1520.7" y1="67.2" x2="1408.6" y2="90.7" stroke="#4b4b4b" stroke-width="1.29" stroke-linecap="round"/><line x1="1408.6" y1="90.7" x2="1267.7" y2="120.2" stroke="#4d4d4d" stroke-width="1.30" stroke-linecap="round"/><line x1="1267.7" y1="120.2" x2="1085.1" y2="158.4" stroke="#4f4f4f" stroke-width="1.32" stroke-linecap="round"/><line x1="1085.1" y1="158.4" x2="839.2" y2="209.9" stroke="#515151" stroke-width="1.33" stroke-linecap="round"/><line x1="977.6" y1="31.3" x2="1038.5" y2="49.9" stroke="#474747" stroke-width="1.26" stroke-linecap="round"/><line x1="1038.5" y1="49.9" x2="1113.9" y2="73.1" stroke="#494949" stroke-width="1.28" stroke-linecap="round"/><line x1="1113.9" y1="73.1" x2="1209.5" y2="102.4" stroke="#4c4c4c" stroke-width="1.29" stroke-linecap="round"/><line x1="1209.5" y1="102.4" x2="1334.9" y2="140.8" stroke="#4e4e4e" stroke-width="1.31" stroke-linecap="round"/><line x1="1334.9" y1="140.8" x2="1506.5" y2="193.4" stroke="#505050" stroke-width="1.33" stroke-linecap="round"/><line x1="1506.5" y1="193.4" x2="1755.5" y2="269.8" stroke="#525252" stroke-width="1.34" stroke-linecap="round"/><line x1="1588.7" y1="80.1" x2="1477.3" y2="106.8" stroke="#4c4c4c" stroke-width="1.30" stroke-linecap="round"/><line x1="1477.3" y1="106.8" x2="1334.9" y2="140.8" stroke="#4e4e4e" stroke-width="1.31" stroke-linecap="round"/><line x1="1334.9" y1="140.8" x2="1146.7" y2="185.8" stroke="#505050" stroke-width="1.33" stroke-linecap="round"/><line x1="1146.7" y1="185.8" x2="886.2" y2="248.1" stroke="#525252" stroke-width="1.34" stroke-linecap="round"/><line x1="965.8" y1="59.3" x2="1036.3" y2="84.9" stroke="#4a4a4a" stroke-width="1.28" stroke-linecap="round"/><line x1="1036.3" y1="84.9" x2="1126.9" y2="117.8" stroke="#4d4d4d" stroke-width="1.30" stroke-linecap="round"/><line x1="1126.9" y1="117.8" x2="1247.8" y2="161.6" stroke="#4f4f4f" stroke-width="1.32" stroke-linecap="round"/><line x1="1247.8" y1="161.6" x2="1417.3" y2="223.1" stroke="#515151" stroke-width="1.33" stroke-linecap="round"/><line x1="1417.3" y1="223.1" x2="1671.8" y2="315.5" stroke="#535353" stroke-width="1.35" stroke-linecap="round"/><line x1="1665.5" y1="94.7" x2="1556.0" y2="125.2" stroke="#4d4d4d" stroke-width="1.30" stroke-linecap="round"/><line x1="1556.0" y1="125.2" x2="1413.5" y2="164.9" stroke="#4f4f4f" stroke-width="1.32" stroke-linecap="round"/><line x1="1413.5" y1="164.9" x2="1220.5" y2="218.6" stroke="#515151" stroke-width="1.33" stroke-linecap="round"/><line x1="1220.5" y1="218.6" x2="944.4" y2="295.5" stroke="#535353" stroke-width="1.35" stroke-linecap="round"/><line x1="925.3" y1="155.3" x2="1027.9" y2="214.2" stroke="#515151" stroke-width="1.33" stroke-linecap="round"/><line x1="1027.9" y1="214.2" x2="1180.5" y2="302.0" stroke="#535353" stroke-width="1.35" stroke-linecap="round"/><line x1="1180.5" y1="302.0" x2="1431.9" y2="446.5" stroke="#555555" stroke-width="1.37" stroke-linecap="round"/><line x1="1431.9" y1="446.5" x2="1923.6" y2="729.1" stroke="#585858" stroke-width="1.38" stroke-linecap="round"/><line x1="1618.4" y1="227.7" x2="1422.9" y2="308.7" stroke="#535353" stroke-width="1.35" stroke-linecap="round"/><line x1="1422.9" y1="308.7" x2="1116.5" y2="435.5" stroke="#555555" stroke-width="1.37" stroke-linecap="round"/><line x1="1116.5" y1="435.5" x2="567.5" y2="662.8" stroke="#575757" stroke-width="1.38" stroke-linecap="round"/><line x1="886.2" y1="248.1" x2="1018.7" y2="355.9" stroke="#545454" stroke-width="1.36" stroke-linecap="round"/><line x1="1018.7" y1="355.9" x2="1251.3" y2="545.1" stroke="#565656" stroke-width="1.37" stroke-linecap="round"/><line x1="1251.3" y1="545.1" x2="1766.5" y2="964.3" stroke="#585858" stroke-width="1.39" stroke-linecap="round"/><line x1="1755.5" y1="269.8" x2="1567.0" y2="372.7" stroke="#545454" stroke-width="1.36" stroke-linecap="round"/><line x1="1567.0" y1="372.7" x2="1251.3" y2="545.1" stroke="#565656" stroke-width="1.37" stroke-linecap="round"/><line x1="1251.3" y1="545.1" x2="614.3" y2="893.0" stroke="#585858" stroke-width="1.39" stroke-linecap="round"/><line x1="811.7" y1="424.8" x2="997.4" y2="683.8" stroke="#575757" stroke-width="1.38" stroke-linecap="round"/><line x1="1758.5" y1="457.9" x2="1448.9" y2="705.9" stroke="#585858" stroke-width="1.38" stroke-linecap="round"/><line x1="2445.4" y1="-119.3" x2="-4847.1" y2="2309.6" stroke="#a8404f" stroke-width="1.5" stroke-opacity="1"/><line x1="1310.5" y1="258.7" x2="8196.1" y2="3320.8" stroke="#6a9426" stroke-width="1.5" stroke-opacity="1"/><line x1="985" y1="111.1" x2="1095" y2="160.3" stroke="#6a9426" stroke-width="1.5"/><line x1="1308.8" y1="0" x2="1308.8" y2="560" stroke="#3f6fb0" stroke-width="1.3"/><polygon points="1084.7,106.0 1324.8,64.9 1540.6,113.6 1517.1,398.5 1291.2,522.0 1109.9,385.4" fill="#a9a9a9"/></g></svg>
<div class="face" style="width:500px;height:500px;transform:matrix3d(-0.15422026,0.055413192,0,-0.00038255571,-0.85451972,0.04728397,0,-0.00034138542,0,0,1,0,1324.9112,62.892068,0,1)"><svg width="960" height="960" viewBox="-230 -230 960 960" style="display:block;position:absolute;left:-230px;top:-230px"><defs><radialGradient id="rg0" gradientUnits="userSpaceOnUse" cx="250.0" cy="250.0" r="17.0" spreadMethod="repeat"><stop offset="0.000" stop-color="rgb(8,8,8)"/><stop offset="0.029" stop-color="rgb(61,61,61)"/><stop offset="0.077" stop-color="rgb(102,102,102)"/><stop offset="0.144" stop-color="rgb(130,130,130)"/><stop offset="0.288" stop-color="rgb(161,161,161)"/><stop offset="0.480" stop-color="rgb(184,184,184)"/><stop offset="0.720" stop-color="rgb(200,200,200)"/><stop offset="0.960" stop-color="rgb(209,209,209)"/><stop offset="1" stop-color="rgb(7,7,7)"/></radialGradient><filter id="wv0" filterUnits="userSpaceOnUse" x="-230" y="-230" width="960" height="960" color-interpolation-filters="sRGB"><feTurbulence type="fractalNoise" baseFrequency="0.00525" numOctaves="2" seed="3" result="t1"/><feColorMatrix in="t1" type="matrix" values="0 0 0 1 0 0 0 0 0 0 0 0 0 0 0 0 0 0 0 1" result="r"/><feTurbulence type="fractalNoise" baseFrequency="0.00525" numOctaves="2" seed="4" result="t2"/><feColorMatrix in="t2" type="matrix" values="0 0 0 0 0 0 0 0 1 0 0 0 0 0 0 0 0 0 0 1" result="g"/><feComposite in="r" in2="g" operator="arithmetic" k1="0" k2="1" k3="1" k4="0" result="n"/><feDisplacementMap in="SourceGraphic" in2="n" scale="460" xChannelSelector="R" yChannelSelector="G"/><feGaussianBlur stdDeviation="0.9"/></filter></defs><rect x="-230" y="-230" width="960" height="960" fill="url(#rg0)" filter="url(#wv0)"/></svg></div>
<div class="face" style="width:500px;height:500px;transform:matrix3d(-0.18596274,0.066818649,0,-0.00046129549,0.31336648,0.65600272,0,0.00023680643,0,0,1,0,1082.4111,104.34498,0,1)"><svg width="960" height="960" viewBox="-230 270 960 960" style="display:block;position:absolute;left:-230px;top:-230px"><defs><radialGradient id="rg1" gradientUnits="userSpaceOnUse" cx="250.0" cy="250.0" r="17.0" spreadMethod="repeat"><stop offset="0.000" stop-color="rgb(8,8,8)"/><stop offset="0.029" stop-color="rgb(61,61,61)"/><stop offset="0.077" stop-color="rgb(102,102,102)"/><stop offset="0.144" stop-color="rgb(130,130,130)"/><stop offset="0.288" stop-color="rgb(161,161,161)"/><stop offset="0.480" stop-color="rgb(184,184,184)"/><stop offset="0.720" stop-color="rgb(200,200,200)"/><stop offset="0.960" stop-color="rgb(209,209,209)"/><stop offset="1" stop-color="rgb(7,7,7)"/></radialGradient><filter id="wv1" filterUnits="userSpaceOnUse" x="-230" y="270" width="960" height="960" color-interpolation-filters="sRGB"><feTurbulence type="fractalNoise" baseFrequency="0.00525" numOctaves="2" seed="3" result="t1"/><feColorMatrix in="t1" type="matrix" values="0 0 0 1 0 0 0 0 0 0 0 0 0 0 0 0 0 0 0 1" result="r"/><feTurbulence type="fractalNoise" baseFrequency="0.00525" numOctaves="2" seed="4" result="t2"/><feColorMatrix in="t2" type="matrix" values="0 0 0 0 0 0 0 0 1 0 0 0 0 0 0 0 0 0 0 1" result="g"/><feComposite in="r" in2="g" operator="arithmetic" k1="0" k2="1" k3="1" k4="0" result="n"/><feDisplacementMap in="SourceGraphic" in2="n" scale="460" xChannelSelector="R" yChannelSelector="G"/><feGaussianBlur stdDeviation="0.9"/></filter></defs><rect x="-230" y="270" width="960" height="960" fill="url(#rg1)" filter="url(#wv1)"/></svg></div>
<div class="face" style="width:500px;height:500px;transform:matrix3d(1.3393108,-0.074109386,0,0.00053506219,0.40731209,0.85266887,0,0.00030779974,0,0,1,0,1286.0555,179.05232,0,1)"><svg width="960" height="960" viewBox="270 270 960 960" style="display:block;position:absolute;left:-230px;top:-230px"><defs><radialGradient id="rg2" gradientUnits="userSpaceOnUse" cx="250.0" cy="250.0" r="17.0" spreadMethod="repeat"><stop offset="0.000" stop-color="rgb(8,8,8)"/><stop offset="0.029" stop-color="rgb(61,61,61)"/><stop offset="0.077" stop-color="rgb(102,102,102)"/><stop offset="0.144" stop-color="rgb(130,130,130)"/><stop offset="0.288" stop-color="rgb(161,161,161)"/><stop offset="0.480" stop-color="rgb(184,184,184)"/><stop offset="0.720" stop-color="rgb(200,200,200)"/><stop offset="0.960" stop-color="rgb(209,209,209)"/><stop offset="1" stop-color="rgb(7,7,7)"/></radialGradient><filter id="wv2" filterUnits="userSpaceOnUse" x="270" y="270" width="960" height="960" color-interpolation-filters="sRGB"><feTurbulence type="fractalNoise" baseFrequency="0.00525" numOctaves="2" seed="3" result="t1"/><feColorMatrix in="t1" type="matrix" values="0 0 0 1 0 0 0 0 0 0 0 0 0 0 0 0 0 0 0 1" result="r"/><feTurbulence type="fractalNoise" baseFrequency="0.00525" numOctaves="2" seed="4" result="t2"/><feColorMatrix in="t2" type="matrix" values="0 0 0 0 0 0 0 0 1 0 0 0 0 0 0 0 0 0 0 1" result="g"/><feComposite in="r" in2="g" operator="arithmetic" k1="0" k2="1" k3="1" k4="0" result="n"/><feDisplacementMap in="SourceGraphic" in2="n" scale="460" xChannelSelector="R" yChannelSelector="G"/><feGaussianBlur stdDeviation="0.9"/></filter></defs><rect x="270" y="270" width="960" height="960" fill="url(#rg2)" filter="url(#wv2)"/></svg></div>
<svg class="abs" style="left:0;top:0" width="1573" height="560" viewBox="0 0 1573 560"><clipPath id="vp2"><rect x="994" y="0" width="579" height="560"/></clipPath><g clip-path="url(#vp2)"><clipPath id="low"><polygon points="1095.9,253.3 1288.7,364.2 1530.4,264.2 1519.2,399.8 1291.0,524.6 1107.9,386.6"/></clipPath><g clip-path="url(#low)" stroke="#404040" stroke-opacity="0.22" stroke-width="1"><line x1="1271.6" y1="20.0" x2="1356.6" y2="36.1"/><line x1="1356.6" y1="36.1" x2="1460.0" y2="55.7"/><line x1="1460.0" y1="55.7" x2="1588.7" y2="80.1"/><line x1="1448.7" y1="22.1" x2="1356.6" y2="36.1"/><line x1="1356.6" y1="36.1" x2="1246.9" y2="52.8"/><line x1="1246.9" y1="52.8" x2="1113.9" y2="73.1"/><line x1="1113.9" y1="73.1" x2="949.4" y2="98.1"/><line x1="1220.6" y1="26.5" x2="1304.2" y2="44.1"/><line x1="1304.2" y1="44.1" x2="1407.0" y2="65.6"/><line x1="1407.0" y1="65.6" x2="1536.2" y2="92.7"/><line x1="1536.2" y1="92.7" x2="1703.6" y2="127.8"/><line x1="1498.0" y1="29.9" x2="1405.7" y2="45.4"/><line x1="1405.7" y1="45.4" x2="1294.7" y2="64.0"/><line x1="1294.7" y1="64.0" x2="1158.7" y2="86.8"/><line x1="1158.7" y1="86.8" x2="988.2" y2="115.4"/><line x1="1165.1" y1="33.7" x2="1246.9" y2="52.8"/><line x1="1246.9" y1="52.8" x2="1348.2" y2="76.6"/><line x1="1348.2" y1="76.6" x2="1477.3" y2="106.8"/><line x1="1477.3" y1="106.8" x2="1647.1" y2="146.6"/><line x1="1552.1" y1="38.6" x2="1460.0" y2="55.7"/><line x1="1460.0" y1="55.7" x2="1348.2" y2="76.6"/><line x1="1348.2" y1="76.6" x2="1209.5" y2="102.4"/><line x1="1209.5" y1="102.4" x2="1033.0" y2="135.3"/><line x1="1033.0" y1="135.3" x2="800.6" y2="178.5"/><line x1="1104.7" y1="41.4" x2="1183.7" y2="62.4"/><line x1="1183.7" y1="62.4" x2="1282.8" y2="88.7"/><line x1="1282.8" y1="88.7" x2="1410.7" y2="122.7"/><line x1="1410.7" y1="122.7" x2="1582.2" y2="168.2"/><line x1="1611.9" y1="48.1" x2="1520.7" y2="67.2"/><line x1="1520.7" y1="67.2" x2="1408.6" y2="90.7"/><line x1="1408.6" y1="90.7" x2="1267.7" y2="120.2"/><line x1="1267.7" y1="120.2" x2="1085.1" y2="158.4"/><line x1="1085.1" y1="158.4" x2="839.2" y2="209.9"/><line x1="1038.5" y1="49.9" x2="1113.9" y2="73.1"/><line x1="1113.9" y1="73.1" x2="1209.5" y2="102.4"/><line x1="1209.5" y1="102.4" x2="1334.9" y2="140.8"/><line x1="1334.9" y1="140.8" x2="1506.5" y2="193.4"/><line x1="1506.5" y1="193.4" x2="1755.5" y2="269.8"/><line x1="1588.7" y1="80.1" x2="1477.3" y2="106.8"/><line x1="1477.3" y1="106.8" x2="1334.9" y2="140.8"/><line x1="1334.9" y1="140.8" x2="1146.7" y2="185.8"/><line x1="1146.7" y1="185.8" x2="886.2" y2="248.1"/><line x1="965.8" y1="59.3" x2="1036.3" y2="84.9"/><line x1="1036.3" y1="84.9" x2="1126.9" y2="117.8"/><line x1="1126.9" y1="117.8" x2="1247.8" y2="161.6"/><line x1="1247.8" y1="161.6" x2="1417.3" y2="223.1"/><line x1="1417.3" y1="223.1" x2="1671.8" y2="315.5"/><line x1="1665.5" y1="94.7" x2="1556.0" y2="125.2"/><line x1="1556.0" y1="125.2" x2="1413.5" y2="164.9"/><line x1="1413.5" y1="164.9" x2="1220.5" y2="218.6"/><line x1="1220.5" y1="218.6" x2="944.4" y2="295.5"/><line x1="925.3" y1="155.3" x2="1027.9" y2="214.2"/><line x1="1027.9" y1="214.2" x2="1180.5" y2="302.0"/><line x1="1180.5" y1="302.0" x2="1431.9" y2="446.5"/><line x1="1431.9" y1="446.5" x2="1923.6" y2="729.1"/><line x1="1618.4" y1="227.7" x2="1422.9" y2="308.7"/><line x1="1422.9" y1="308.7" x2="1116.5" y2="435.5"/><line x1="1116.5" y1="435.5" x2="567.5" y2="662.8"/><line x1="886.2" y1="248.1" x2="1018.7" y2="355.9"/><line x1="1018.7" y1="355.9" x2="1251.3" y2="545.1"/><line x1="1251.3" y1="545.1" x2="1766.5" y2="964.3"/><line x1="1755.5" y1="269.8" x2="1567.0" y2="372.7"/><line x1="1567.0" y1="372.7" x2="1251.3" y2="545.1"/><line x1="1251.3" y1="545.1" x2="614.3" y2="893.0"/><line x1="811.7" y1="424.8" x2="997.4" y2="683.8"/><line x1="1758.5" y1="457.9" x2="1448.9" y2="705.9"/></g><line x1="811.7" y1="424.8" x2="1180.5" y2="302.0" stroke="#a8404f" stroke-width="1.5"/><line x1="1758.5" y1="457.9" x2="1422.9" y2="308.7" stroke="#6a9426" stroke-width="1.5"/><line x1="1308.8" y1="50" x2="1308.8" y2="108.1" stroke="#3f6fb0" stroke-width="1.3"/></g></svg>
</body></html>
